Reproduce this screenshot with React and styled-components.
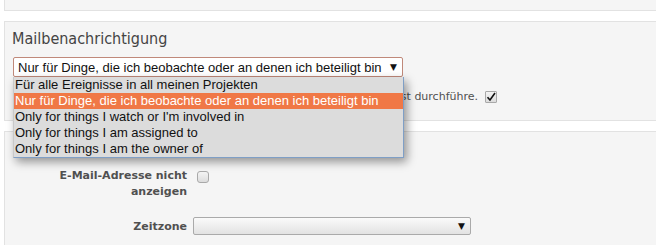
import styled, { createGlobalStyle } from "styled-components";

const GlobalStyle = createGlobalStyle`
	html, body {
		margin: 0;
		padding: 0;
		background: #fff;
		overflow: hidden;
	}
	body {
		font-family: "DejaVu Sans", Verdana, sans-serif;
		font-size: 11px;
		color: #505050;
	}
`;

const notificationOptions = [
	"Für alle Ereignisse in all meinen Projekten",
	"Nur für Dinge, die ich beobachte oder an denen ich beteiligt bin",
	"Only for things I watch or I'm involved in",
	"Only for things I am assigned to",
	"Only for things I am the owner of",
];

export default function App() {
	const selected = 1;
	return (
		<Page>
			<GlobalStyle />
			<TopBox />
			<Box>
				<Heading>Mailbenachrichtigung</Heading>
				<FakeSelect>
					<span>{notificationOptions[selected]}</span>
					<Arrow>▼</Arrow>
				</FakeSelect>
				<CheckRow>
					<span>Ich will keine E-Mails über Änderungen, die ich selbst durchführe.</span>
					<CheckBox $checked>
						<svg width="10" height="10" viewBox="0 0 10 10">
							<path d="M1.5 5.2 L4 8 L9 1" fill="none" stroke="#111" strokeWidth="1.6" />
						</svg>
					</CheckBox>
				</CheckRow>
				<OptionList>
					{notificationOptions.map((opt, i) => (
						<OptionItem key={opt} $active={i === selected}>
							{opt}
						</OptionItem>
					))}
				</OptionList>
			</Box>
			<LastBox>
				<FormRow $gap={22}>
					<Label>E-Mail-Adresse nicht anzeigen</Label>
					<CheckBox />
				</FormRow>
				<FormRow>
					<Label>Zeitzone</Label>
					<GraySelect>
						<Arrow>▼</Arrow>
					</GraySelect>
				</FormRow>
			</LastBox>
		</Page>
	);
}

const Page = styled.div`
	width: 656px;
	height: 245px;
	overflow: hidden;
	position: relative;
`;

const Box = styled.div`
	position: relative;
	width: 700px;
	margin-left: 4px;
	background: #f5f5f5;
	border: 1px solid #e2e2e2;
	box-sizing: border-box;
	height: 100px;
	margin-top: 10px;
	padding: 7px 8px 0 8px;
`;

const TopBox = styled(Box)`
	height: 11px;
	margin-top: 0;
	border-top: none;
	padding: 0;
`;

const LastBox = styled(Box)`
	height: 130px;
	padding-top: 39px;
`;

const Heading = styled.h3`
	margin: 0 0 8px -1px;
	font-family: "DejaVu Sans Condensed", "DejaVu Sans", sans-serif;
	font-stretch: condensed;
	font-size: 16px;
	font-weight: normal;
	line-height: 20px;
	color: #444;
`;

const FakeSelect = styled.div`
	display: flex;
	align-items: center;
	justify-content: space-between;
	width: 390px;
	height: 20px;
	box-sizing: border-box;
	padding: 0 5px 0 4px;
	background: #fff;
	border: 1px solid #c0897a;
	border-radius: 2px;
	font-family: "Liberation Sans", Arial, sans-serif;
	font-size: 13px;
	color: #111;
`;

const Arrow = styled.span`
	font-size: 9px;
	color: #111;
	font-family: "DejaVu Sans", sans-serif;
`;

const CheckRow = styled.div`
	display: flex;
	align-items: center;
	justify-content: flex-end;
	gap: 7px;
	width: 487px;
	margin: 12px 0 0 -3px;
	line-height: 16px;
	white-space: nowrap;
`;

const CheckBox = styled.span`
	display: inline-flex;
	align-items: center;
	justify-content: center;
	flex: none;
	width: 12px;
	height: 12px;
	box-sizing: border-box;
	border: 1px solid #a9a9a9;
	border-radius: ${(p) => (p.$checked ? "1px" : "3px")};
	background: linear-gradient(#f4f4f4, #dcdcdc);
`;

const OptionList = styled.ul`
	position: absolute;
	left: 8px;
	top: 55px;
	width: 389px;
	margin: 0;
	padding: 0;
	list-style: none;
	background: #dcdcdc;
	border: 1px solid #7f9fc6;
	border-left-color: #c9c9c9;
	border-top: none;
	box-shadow: 3px 4px 9px rgba(0, 0, 0, 0.4);
	z-index: 2;
	font-family: "Liberation Sans", Arial, sans-serif;
	font-size: 13px;
`;

const OptionItem = styled.li`
	height: 16px;
	line-height: 16px;
	padding-left: 1px;
	white-space: nowrap;
	color: ${(p) => (p.$active ? "#fff" : "#111")};
	background: ${(p) => (p.$active ? "#f07846" : "transparent")};
`;

const FormRow = styled.div`
	display: flex;
	align-items: flex-start;
	gap: 10px;
	margin-bottom: ${(p) => p.$gap ?? 16}px;
`;

const Label = styled.label`
	width: 174px;
	text-align: right;
	font-weight: bold;
	line-height: 16px;
	color: #505050;
	margin-top: -3px;
`;

const GraySelect = styled.div`
	display: flex;
	align-items: center;
	justify-content: flex-end;
	width: 278px;
	height: 18px;
	margin: -5px 0 0 -4px;
	padding-right: 5px;
	box-sizing: border-box;
	border: 1px solid #aaa;
	border-radius: 2px;
	background: linear-gradient(#fafafa, #e2e2e2);
`;
